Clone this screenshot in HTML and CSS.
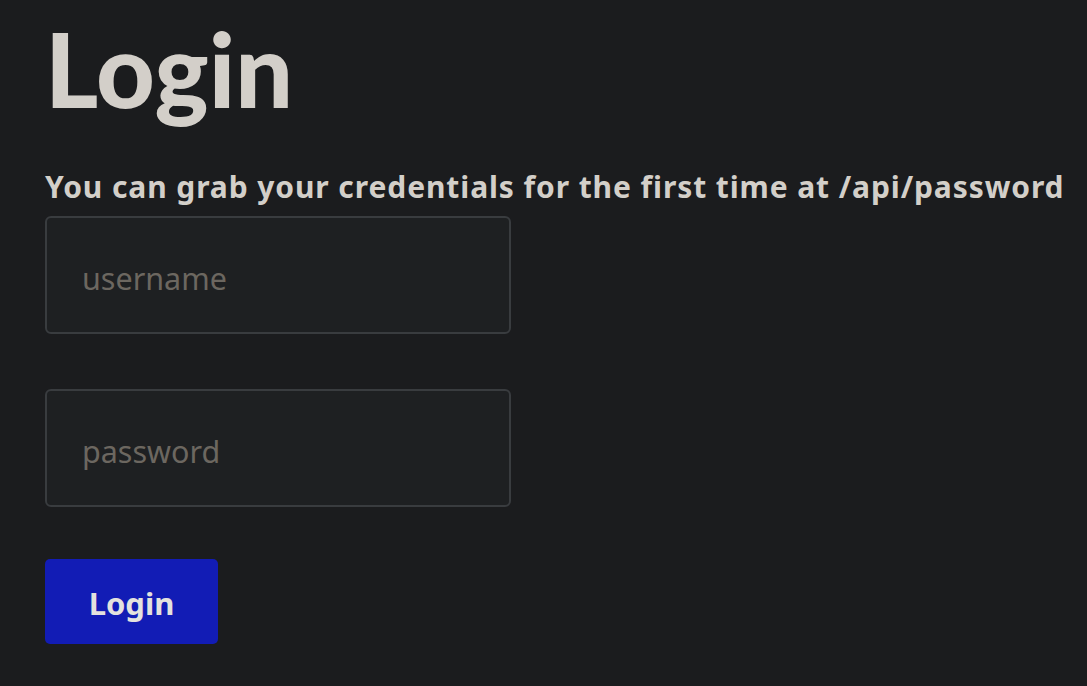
FILE: index.html
```html
<!DOCTYPE html>
<html lang="en">
<head>
<meta charset="utf-8">
<title>Login</title>
<link rel="stylesheet" href="styles.css">
</head>
<body>
<main class="page">
  <h1 class="title">Login</h1>
  <h3 class="hint">You can grab your credentials for the first time at /api/password</h3>
  <form class="form">
    <input class="field" type="text" placeholder="username">
    <input class="field" type="password" placeholder="password">
    <button class="submit" type="button">Login</button>
  </form>
</main>
</body>
</html>
```
FILE: styles.css
```css
html, body {
  margin: 0;
  padding: 0;
  background: #1b1c1e;
}
body {
  font-family: "Noto Sans", sans-serif;
  color: #d3cfc9;
}
.page {
  padding-left: 45px;
}
.title {
  margin: 7px 0 0 0;
  font-family: Lato, "Noto Sans", sans-serif;
  font-size: 102px;
  line-height: normal;
  font-weight: 900;
}
.hint {
  margin: 36px 0 0 0;
  font-size: 30px;
  font-weight: 700;
  line-height: normal;
  letter-spacing: 0.9px;
  font-variant-ligatures: none;
  white-space: nowrap;
}
.form {
  display: flex;
  flex-direction: column;
  align-items: flex-start;
  margin-top: 9px;
}
.field {
  box-sizing: border-box;
  width: 466px;
  height: 118px;
  margin: 0;
  padding: 5px 0 0 35px;
  background: #1e2022;
  border: 2px solid #393c3f;
  border-radius: 6px;
  font-family: inherit;
  font-size: 30.5px;
  color: #d3cfc9;
  outline: none;
}
.field + .field {
  margin-top: 55px;
}
.field::placeholder {
  color: #6c6760;
}
.submit {
  box-sizing: border-box;
  width: 173px;
  height: 85px;
  margin-top: 52px;
  padding: 2px 0 0 0;
  background: #121cb5;
  border: none;
  border-radius: 5px;
  color: #e4e2de;
  font-family: inherit;
  font-size: 31px;
  font-weight: 700;
}
```
